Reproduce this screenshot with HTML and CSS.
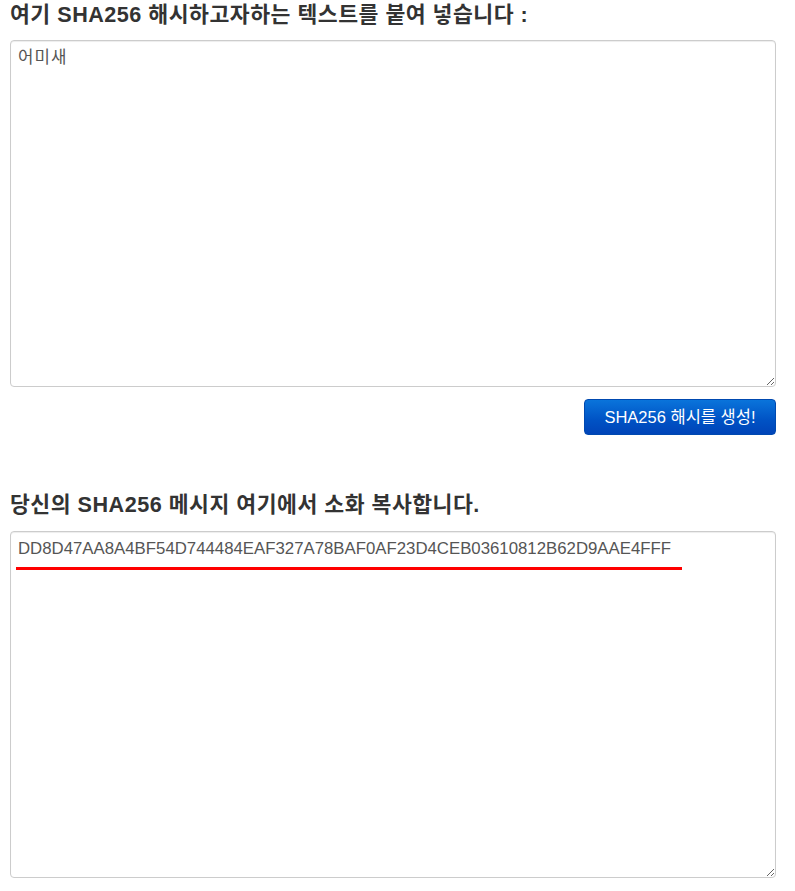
FILE: index.html
```html
<!DOCTYPE html>
<html lang="ko">
<head>
<meta charset="utf-8">
<title>SHA256</title>
<link rel="stylesheet" href="styles.css">
</head>
<body>
<main class="page">
  <h4 class="label">여기 SHA256 해시하고자하는 텍스트를 붙여 넣습니다 :</h4>
  <textarea class="box box-input">어미새</textarea>
  <div class="actions">
    <button class="btn" type="button">SHA256 해시를 생성!</button>
  </div>
  <h4 class="label label-out">당신의 SHA256 메시지 여기에서 소화 복사합니다.</h4>
  <div class="out-wrap">
    <textarea class="box box-output" readonly>DD8D47AA8A4BF54D744484EAF327A78BAF0AF23D4CEB03610812B62D9AAE4FFF</textarea>
    <span class="mark"></span>
  </div>
</main>
</body>
</html>
```
FILE: styles.css
```css
html, body {
  margin: 0;
  padding: 0;
  background: #fff;
}
.page {
  width: 766px;
  padding: 0 0 0 10px;
  font-family: "Liberation Sans", "Noto Sans CJK KR", sans-serif;
  color: #333;
}
.label {
  margin: 3px 0 13px;
  font-size: 21.6px;
  line-height: 24px;
  font-weight: bold;
  letter-spacing: 0.5px;
  color: #333;
}
.label-out {
  margin-top: 58px;
  margin-bottom: 14px;
}
.box {
  display: block;
  box-sizing: border-box;
  width: 766px;
  margin: 0;
  padding: 7px 7px 6px;
  border: 1px solid #ccc;
  border-radius: 4px;
  box-shadow: inset 0 1px 1px rgba(0,0,0,0.075);
  font-family: "Liberation Sans", "Noto Sans CJK KR", sans-serif;
  font-size: 16.8px;
  line-height: 20px;
  color: #555;
  background: #fff;
  outline: none;
}
.box-input {
  height: 347px;
  letter-spacing: 1px;
}
.box-output {
  height: 347px;
}
.actions {
  display: flex;
  justify-content: flex-end;
  margin-top: 12px;
}
.btn {
  box-sizing: border-box;
  width: 192px;
  height: 36px;
  padding: 0;
  border: 1px solid #0049b0;
  border-radius: 4px;
  background: linear-gradient(to bottom, #0a74db 0%, #0052c4 60%, #0044b8 100%);
  color: #fff;
  font-family: "Liberation Sans", "Noto Sans CJK KR", sans-serif;
  font-size: 16.5px;
  line-height: 34px;
}
.out-wrap {
  position: relative;
}
.mark {
  position: absolute;
  left: 6px;
  top: 36px;
  width: 666px;
  height: 3px;
  background: #f00;
}
```
